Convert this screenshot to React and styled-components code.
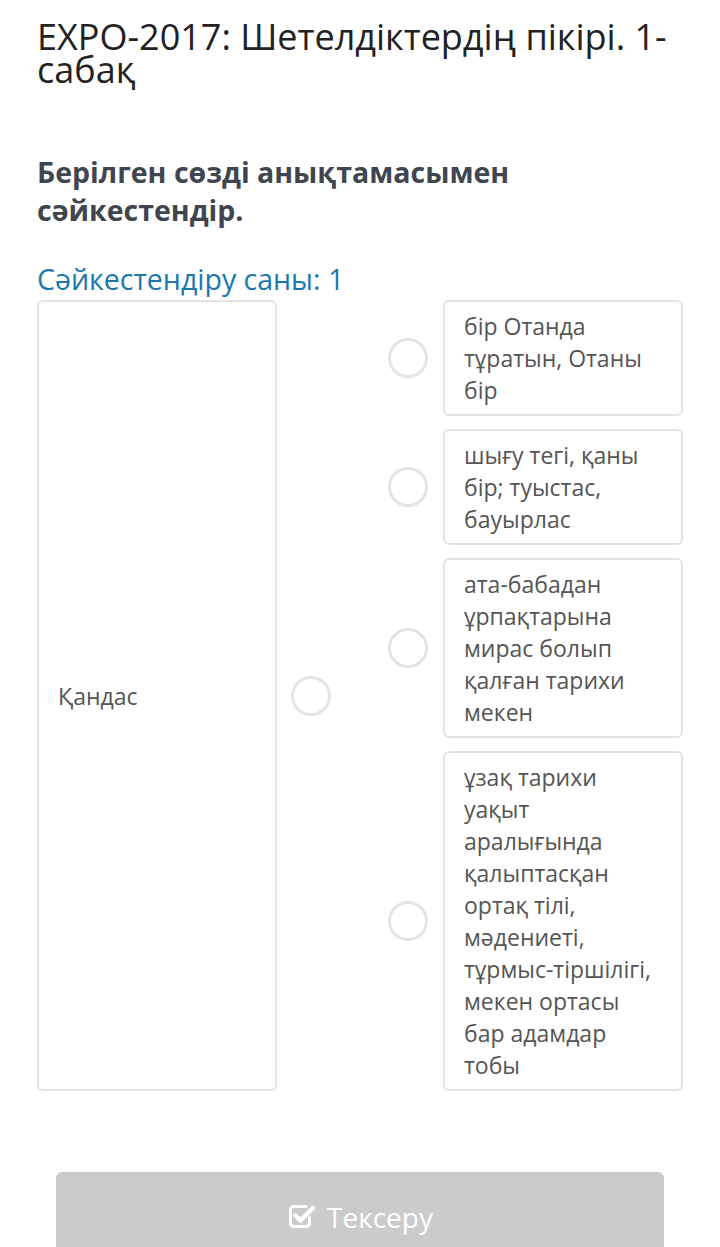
import React from 'react';
import styled, { createGlobalStyle } from 'styled-components';

const GlobalStyle = createGlobalStyle`
  html, body {
    margin: 0;
    padding: 0;
    background: #ffffff;
  }
  body {
    font-family: "Open Sans", "Liberation Sans", sans-serif;
  }
`;

const Page = styled.div`
  padding: 20px 37px 0 37px;
  overflow: hidden;
  height: 1247px;
  box-sizing: border-box;
`;

const Title = styled.h1`
  margin: 0;
  font-size: 36px;
  line-height: 33px;
  font-weight: 400;
  color: #222222;
`;

const Question = styled.h2`
  margin: 67px 0 0 0;
  font-size: 28.5px;
  line-height: 38px;
  font-weight: 700;
  color: #3f4650;
`;

const Counter = styled.div`
  margin-top: 32px;
  font-size: 28.5px;
  line-height: 36px;
  color: #1b78ad;
`;

const Match = styled.div`
  display: flex;
  align-items: stretch;
  margin-top: 3px;
`;

const TermBox = styled.div`
  width: 240px;
  box-sizing: border-box;
  border: 2px solid #e4e4e4;
  border-radius: 6px;
  padding: 0 19px;
  display: flex;
  align-items: center;
  font-size: 23px;
  line-height: 32px;
  color: #555555;
`;

const Dot = styled.div`
  width: 40px;
  height: 40px;
  box-sizing: border-box;
  border-radius: 50%;
  border: 3px solid #e2e4e6;
  flex-shrink: 0;
  align-self: center;
  margin-left: ${p => p.$gap}px;
  margin-right: ${p => p.$after}px;
`;

const Options = styled.div`
  display: flex;
  flex-direction: column;
  gap: 13px;
`;

const OptionRow = styled.div`
  display: flex;
  align-items: center;
`;

const Card = styled.div`
  width: 240px;
  box-sizing: border-box;
  border: 2px solid #e4e4e4;
  border-radius: 6px;
  padding: 8px 18px 8px 19px;
  font-size: 23px;
  line-height: 32px;
  color: #555555;
`;

const ButtonBar = styled.div`
  margin-top: 81px;
  padding: 0 19px;
`;

const CheckButton = styled.button`
  width: 100%;
  height: 90px;
  border: none;
  border-radius: 6px;
  background: #cbcbcb;
  color: #ffffff;
  font-family: "Open Sans", "Liberation Sans", sans-serif;
  font-size: 28px;
  display: flex;
  align-items: center;
  justify-content: center;
  gap: 11px;
  padding-bottom: 2px;
`;

const CheckIcon = () => (
  <svg width="29" height="27" viewBox="0 0 29 27" fill="none">
    <path
      d="M19 3.5H6.5a3 3 0 0 0-3 3v14a3 3 0 0 0 3 3h13a3 3 0 0 0 3-3v-6"
      stroke="#ffffff"
      strokeWidth="3"
      strokeLinecap="round"
    />
    <path
      d="M8.5 12.5l5 5L26 5"
      stroke="#ffffff"
      strokeWidth="4.5"
      strokeLinecap="round"
      strokeLinejoin="round"
    />
  </svg>
);

const options = [
  'бір Отанда тұратын, Отаны бір',
  'шығу тегі, қаны бір; туыстас, бауырлас',
  'ата-бабадан ұрпақтарына мирас болып қалған тарихи мекен',
  'ұзақ тарихи уақыт аралығында қалыптасқан ортақ тілі, мәдениеті, тұрмыс-тіршілігі, мекен ортасы бар адамдар тобы',
];

const App = () => (
  <>
    <GlobalStyle />
    <Page>
      <Title>EXPO-2017: Шетелдіктердің пікірі. 1-сабақ</Title>
      <Question>Берілген сөзді анықтамасымен сәйкестендір.</Question>
      <Counter>Сәйкестендіру саны: 1</Counter>
      <Match>
        <TermBox>Қандас</TermBox>
        <Dot $gap={14} $after={57} />
        <Options>
          {options.map((text, i) => (
            <OptionRow key={i}>
              <Dot $gap={0} $after={15} />
              <Card>{text}</Card>
            </OptionRow>
          ))}
        </Options>
      </Match>
      <ButtonBar>
        <CheckButton>
          <CheckIcon />
          Тексеру
        </CheckButton>
      </ButtonBar>
    </Page>
  </>
);

export default App;
